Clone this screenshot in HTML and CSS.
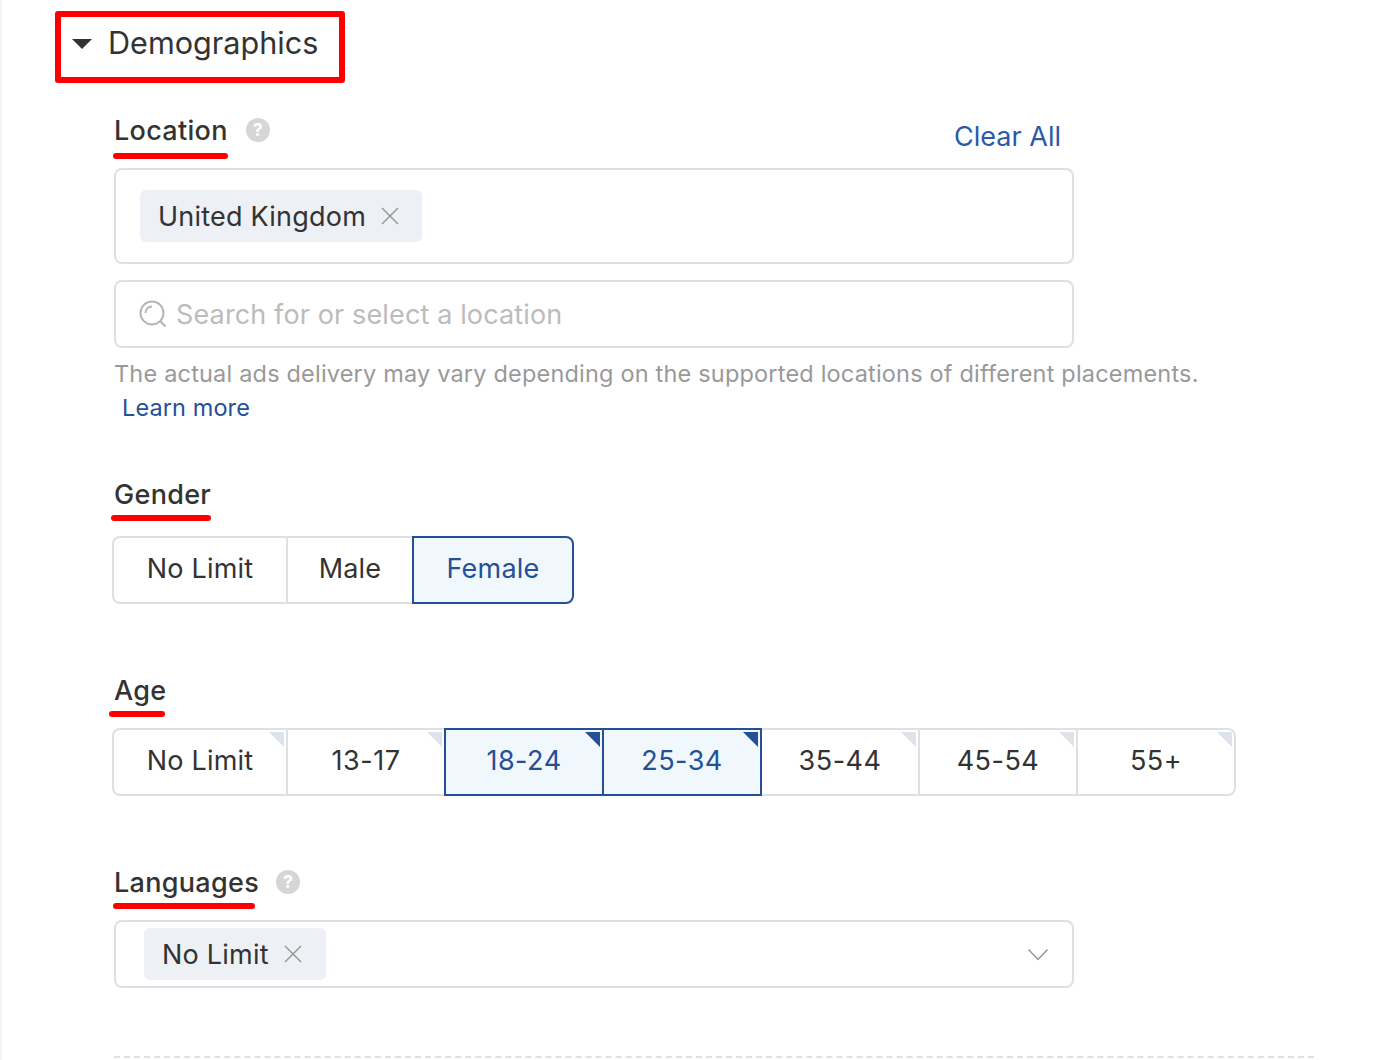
FILE: index.html
```html
<!DOCTYPE html>
<html lang="en">
<head>
<meta charset="utf-8">
<title>Demographics</title>
<link rel="stylesheet" href="styles.css">
</head>
<body>
<main class="page">
  <div class="section-head">
    <span class="caret"></span>
    <h2 class="section-title">Demographics</h2>
  </div>

  <div class="form">
    <section class="field field-location">
      <div class="label-row">
        <span class="label mark-location">Location</span>
        <span class="help">?</span>
        <a class="clear-all">Clear All</a>
      </div>
      <div class="box box-selected">
        <span class="chip">United Kingdom
          <svg class="x" viewBox="0 0 18 18"><path d="M1 1L17 17M17 1L1 17"/></svg>
        </span>
      </div>
      <div class="box box-search">
        <svg class="search" viewBox="0 0 28 28"><circle cx="13" cy="13" r="11.500"/><path d="M21 21L26.500 26.500M6.500 13A6.500 6.500 0 0 1 13 6.500"/></svg>
        <span class="placeholder">Search for or select a location</span>
      </div>
      <p class="hint">The actual ads delivery may vary depending on the supported locations of different placements.</p>
      <a class="learn">Learn more</a>
    </section>

    <section class="field field-gender">
      <div class="label-row">
        <span class="label mark-gender">Gender</span>
      </div>
      <div class="seg seg-gender">
        <button class="opt w-174">No Limit</button>
        <button class="opt w-126">Male</button>
        <button class="opt w-162 on last">Female</button>
      </div>
    </section>

    <section class="field field-age">
      <div class="label-row">
        <span class="label mark-age">Age</span>
      </div>
      <div class="seg seg-age">
        <button class="opt w-174 tri">No Limit</button>
        <button class="opt w-158 tri num">13-17</button>
        <button class="opt w-160 on tri num">18-24</button>
        <button class="opt w-160 on tri num">25-34</button>
        <button class="opt w-156 tri num">35-44</button>
        <button class="opt w-158 tri num">45-54</button>
        <button class="opt w-160 tri last num">55+</button>
      </div>
    </section>

    <section class="field field-lang">
      <div class="label-row">
        <span class="label mark-lang">Languages</span>
        <span class="help help-lang">?</span>
      </div>
      <div class="box box-lang">
        <span class="chip">No Limit
          <svg class="x" viewBox="0 0 18 18"><path d="M1 1L17 17M17 1L1 17"/></svg>
        </span>
        <svg class="chev" viewBox="0 0 20 12"><path d="M0.500 0.500L10 10.500L19.500 0.500"/></svg>
      </div>
    </section>

    <div class="divider"></div>
  </div>
</main>
</body>
</html>
```

FILE: styles.css
```css
* { box-sizing: border-box; }
html, body { margin: 0; padding: 0; background: #fff; }
body {
  font-family: Inter, "Noto Sans", sans-serif;
  color: #333;
  height: 1060px;
  overflow: hidden;
}
.page {
  height: 1060px;
  border-left: 2px solid #f1f4f8;
  padding-top: 11px;
}
.section-head {
  margin-left: 53px;
  width: 290px;
  height: 72px;
  border: 6px solid #f00;
  border-radius: 3px;
  display: flex;
  align-items: center;
  padding-left: 12px;
  margin-bottom: 27px;
}
.caret {
  width: 0;
  height: 0;
  border-left: 10px solid transparent;
  border-right: 10px solid transparent;
  border-top: 10px solid #333;
  margin-left: -1px;
  margin-right: 16px;
  margin-top: -7px;
}
.section-title {
  margin: -8px 0 0;
  font-size: 30.600px;
  font-weight: 400;
  line-height: 40px;
  white-space: nowrap;
}
.form { margin-left: 112px; width: 1200px; }
.field { display: block; }
.label-row {
  position: relative;
  display: flex;
  align-items: center;
  height: 40px;
  width: 960px;
}
.label {
  position: relative;
  font-size: 27px;
  line-height: 40px;
  font-weight: 450;
  letter-spacing: 0.300px;
  color: #333;
}
.label::after {
  content: "";
  position: absolute;
  height: 6px;
  border-radius: 3px;
  background: #f00;
}
.mark-location { margin-top: 2px; }
.mark-location::after { left: -1px; right: 0; top: 42px; }
.mark-gender::after { left: -3px; right: 0; top: 40px; }
.mark-age::after { left: -5px; right: 1px; top: 40px; }
.mark-lang::after { left: -1px; right: 4px; top: 40px; }
.help {
  width: 24px;
  height: 24px;
  border-radius: 50%;
  background: #d6d6d6;
  color: #fff;
  font-size: 18px;
  font-weight: 700;
  line-height: 24px;
  text-align: center;
  margin-left: 18px;
}
.help-lang { margin-left: 17px; margin-top: -2px; }
.clear-all {
  margin-left: auto;
  margin-right: 13px;
  margin-top: 12px;
  color: #2a5aa8;
  font-size: 27px;
}
.box {
  width: 960px;
  background: #fff;
  border: 2px solid #dde1e6;
  border-radius: 8px;
  display: flex;
  align-items: center;
}
.box-selected { height: 96px; margin-top: 18px; padding-left: 24px; }
.box-search { height: 68px; margin-top: 16px; padding-left: 23px; }
.box-lang { height: 68px; margin-top: 17px; padding-left: 28px; padding-right: 24px; justify-content: space-between; }
.chip {
  display: inline-flex;
  align-items: center;
  height: 52px;
  padding: 0 23px 0 18px;
  background: #edf0f4;
  border-radius: 6px;
  font-size: 27px;
  letter-spacing: 0.220px;
  color: #333;
  white-space: nowrap;
}
.box-lang .chip { padding-right: 24px; }
.x { width: 18px; height: 18px; margin-left: 15px; }
.x path { fill: none; stroke: #939393; stroke-width: 1.400; }
.search { width: 28px; height: 28px; }
.search circle, .search path { fill: none; stroke: #b5b5b5; stroke-width: 2; }
.placeholder { margin-left: 9px; font-size: 27px; letter-spacing: 0.130px; color: #bcbcbc; white-space: nowrap; }
.chev { width: 20px; height: 12px; margin-top: 2px; }
.chev path { fill: none; stroke: #939393; stroke-width: 1.400; }
.hint {
  margin: 10px 0 0;
  font-size: 23.500px;
  letter-spacing: 0.190px;
  line-height: 32px;
  color: #999;
  white-space: nowrap;
}
.learn {
  display: block;
  margin: 2px 0 0 8px;
  font-size: 23.500px;
  letter-spacing: 0.100px;
  line-height: 32px;
  color: #254f97;
}
.field-gender { margin-top: 51px; }
.field-age { margin-top: 67px; }
.field-lang { margin-top: 67px; }
.seg { display: flex; height: 68px; margin-left: -2px; }
.seg-gender { margin-top: 21px; }
.seg-age { margin-top: 17px; }
.opt {
  position: relative;
  height: 68px;
  padding: 0 0 4px;
  background: #fff;
  border: 2px solid #dde1e6;
  border-right-width: 0;
  font: 400 27px Inter, "Noto Sans", sans-serif;
  letter-spacing: 0.200px;
  color: #333;
}
.opt.num { letter-spacing: 0.500px; }
.opt:first-child { border-radius: 8px 0 0 8px; }
.opt.last { border-right-width: 2px; border-radius: 0 8px 8px 0; }
.opt.on {
  background: #f0f8fe;
  border: 2px solid #254f97;
  color: #254f97;
  z-index: 1;
}
.opt.on + .opt.on { margin-left: -2px; }
.opt.on + .opt:not(.on) { border-left-width: 0; }
.tri::after {
  content: "";
  position: absolute;
  top: 2px;
  right: 2px;
  width: 0;
  height: 0;
  border-left: 15px solid transparent;
  border-top: 15px solid #dde3e9;
}
.tri.on::after { border-top-color: #254f97; }
.w-126 { width: 126px; }
.w-156 { width: 156px; }
.w-158 { width: 158px; }
.w-160 { width: 160px; }
.w-162 { width: 162px; }
.w-174 { width: 174px; }
.divider {
  margin-top: 68px;
  width: 1200px;
  border-top: 2px dashed #dde1e6;
}
```
